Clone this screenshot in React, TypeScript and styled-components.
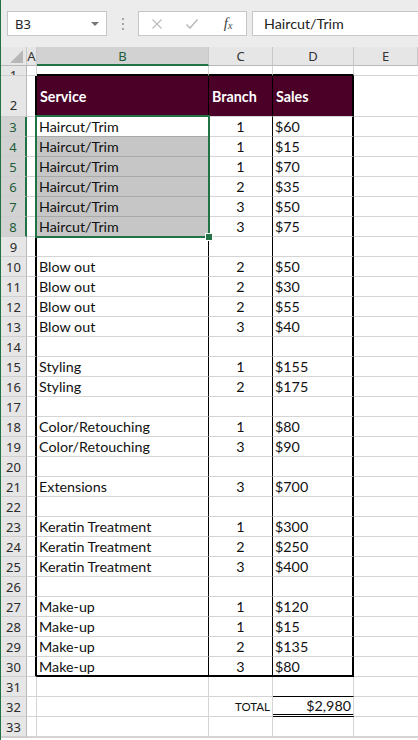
import React from "react";
import styled, { createGlobalStyle } from "styled-components";

const GREEN = "#217346";
const GRID = "#d4d4d4";
const MAROON = "#4a0027";
const CELL_FONT = `"Lato", "Open Sans", sans-serif`;
const UI_FONT = `"Noto Sans", "Open Sans", sans-serif`;

type Edge = "grid" | "thin" | "thick" | "double" | "sel" | "none";

const line = (e: Edge = "grid") => {
  switch (e) {
    case "thin":
      return "1px solid #000";
    case "thick":
      return "2px solid #000";
    case "double":
      return "3px double #000";
    case "sel":
      return "1px solid #a9a9a9";
    case "none":
      return "none";
    default:
      return `1px solid ${GRID}`;
  }
};

const GlobalStyle = createGlobalStyle`
  html, body { margin: 0; padding: 0; background: #fff; overflow: hidden; }
`;

const Window = styled.div`
  width: 418px;
  height: 740px;
  box-sizing: border-box;
  border-left: 1px solid ${GREEN};
  overflow: hidden;
  background: #fff;
`;

const Toolbar = styled.div`
  height: 47px;
  box-sizing: border-box;
  padding: 11px 0 0 6px;
  display: flex;
  align-items: flex-start;
  background: #ececec;
`;

const NameBox = styled.div`
  width: 100px;
  height: 25px;
  box-sizing: border-box;
  border: 1px solid #c6c6c6;
  background: #fff;
  display: flex;
  align-items: center;
  justify-content: space-between;
  padding: 0 7px 0 7px;
  font: 13px ${UI_FONT};
  color: #222;
`;

const Caret = styled.span`
  width: 0;
  height: 0;
  border-left: 4px solid transparent;
  border-right: 4px solid transparent;
  border-top: 4px solid #777;
`;

const Dots = styled.div`
  width: 31px;
  height: 25px;
  display: flex;
  flex-direction: column;
  align-items: center;
  justify-content: center;
  gap: 3px;
  span {
    width: 2px;
    height: 2px;
    background: #a6a6a6;
  }
`;

const FxGroup = styled.div`
  width: 109px;
  height: 25px;
  box-sizing: border-box;
  border: 1px solid #c6c6c6;
  background: #fff;
  display: grid;
  grid-template-columns: repeat(3, 1fr);
  align-items: center;
  justify-items: center;
`;

const FxLabel = styled.span`
  font: italic 15px "Liberation Serif", serif;
  color: #444;
  sub {
    font-size: 10px;
    vertical-align: -1px;
  }
`;

const FormulaInput = styled.div`
  flex: 1;
  margin-left: 5px;
  height: 25px;
  box-sizing: border-box;
  border: 1px solid #c6c6c6;
  border-right: none;
  background: #fff;
  display: flex;
  align-items: center;
  padding-left: 11px;
  font: 14.3px ${CELL_FONT};
  color: #222;
`;

const Sheet = styled.div`
  position: relative;
  display: grid;
  grid-template-columns: 26px 10px 172px 64px 81px 1fr;
  grid-template-rows: 19px 10px 41px repeat(31, 20px);
`;

const Corner = styled.div`
  position: relative;
  box-sizing: border-box;
  background: #e6e6e6;
  border-right: 1px solid #c9c9c9;
  border-bottom: 1px solid #b9b9b9;
  &::after {
    content: "";
    position: absolute;
    right: 3px;
    bottom: 2px;
    width: 0;
    height: 0;
    border-left: 13px solid transparent;
    border-bottom: 13px solid #b7b7b7;
  }
`;

const ColHead = styled.div<{ $active?: boolean }>`
  box-sizing: border-box;
  display: flex;
  align-items: center;
  justify-content: center;
  overflow: hidden;
  background: ${(p) => (p.$active ? "#d2d2d2" : "#e6e6e6")};
  border-right: 1px solid #c9c9c9;
  border-bottom: ${(p) => (p.$active ? `2px solid ${GREEN}` : "1px solid #b9b9b9")};
  font: 13px ${UI_FONT};
  color: ${(p) => (p.$active ? "#1d5c38" : "#333")};
`;

const RowHead = styled.div<{ $active?: boolean; $pin?: "top" | "bottom" }>`
  box-sizing: border-box;
  display: flex;
  align-items: ${(p) => (p.$pin === "top" ? "flex-start" : p.$pin === "bottom" ? "flex-end" : "center")};
  justify-content: center;
  padding-bottom: ${(p) => (p.$pin === "bottom" ? 2 : 0)}px;
  line-height: ${(p) => (p.$pin === "top" ? "4px" : "normal")};
  overflow: hidden;
  background: ${(p) => (p.$active ? "#d2d2d2" : "#e6e6e6")};
  border-right: ${(p) => (p.$active ? `2px solid ${GREEN}` : "1px solid #b9b9b9")};
  border-bottom: 1px solid #cfcfcf;
  font: 13px ${UI_FONT};
  color: ${(p) => (p.$active ? "#1d5c38" : "#2b2b2b")};
`;

const Cell = styled.div<{
  $align?: "left" | "center" | "right";
  $fill?: string;
  $head?: boolean;
  $small?: boolean;
  $right?: Edge;
  $bottom?: Edge;
}>`
  box-sizing: border-box;
  display: flex;
  align-items: center;
  justify-content: ${(p) =>
    p.$align === "center" ? "center" : p.$align === "right" ? "flex-end" : "flex-start"};
  padding: 0 2px 0 ${(p) => (p.$head ? 3 : 2)}px;
  overflow: hidden;
  white-space: nowrap;
  background: ${(p) => p.$fill || "#fff"};
  border-right: ${(p) => line(p.$right)};
  border-bottom: ${(p) => line(p.$bottom)};
  font-family: ${CELL_FONT};
  font-size: ${(p) => (p.$small ? 11.5 : 14.3)}px;
  font-weight: ${(p) => (p.$head ? 700 : 400)};
  color: ${(p) => (p.$head ? "#fff" : "#111")};
`;

const Selection = styled.div`
  position: absolute;
  left: 34px;
  top: 68px;
  width: 175px;
  height: 123px;
  box-sizing: border-box;
  border: 2px solid ${GREEN};
  pointer-events: none;
`;

const Handle = styled.span`
  position: absolute;
  right: -5px;
  bottom: -5px;
  width: 6px;
  height: 6px;
  background: ${GREEN};
  border: 1px solid #fff;
`;

type Row = { n: number; b?: string; c?: string; d?: string };

const rows: Row[] = [
  { n: 3, b: "Haircut/Trim", c: "1", d: "$60" },
  { n: 4, b: "Haircut/Trim", c: "1", d: "$15" },
  { n: 5, b: "Haircut/Trim", c: "1", d: "$70" },
  { n: 6, b: "Haircut/Trim", c: "2", d: "$35" },
  { n: 7, b: "Haircut/Trim", c: "3", d: "$50" },
  { n: 8, b: "Haircut/Trim", c: "3", d: "$75" },
  { n: 9 },
  { n: 10, b: "Blow out", c: "2", d: "$50" },
  { n: 11, b: "Blow out", c: "2", d: "$30" },
  { n: 12, b: "Blow out", c: "2", d: "$55" },
  { n: 13, b: "Blow out", c: "3", d: "$40" },
  { n: 14 },
  { n: 15, b: "Styling", c: "1", d: "$155" },
  { n: 16, b: "Styling", c: "2", d: "$175" },
  { n: 17 },
  { n: 18, b: "Color/Retouching", c: "1", d: "$80" },
  { n: 19, b: "Color/Retouching", c: "3", d: "$90" },
  { n: 20 },
  { n: 21, b: "Extensions", c: "3", d: "$700" },
  { n: 22 },
  { n: 23, b: "Keratin Treatment", c: "1", d: "$300" },
  { n: 24, b: "Keratin Treatment", c: "2", d: "$250" },
  { n: 25, b: "Keratin Treatment", c: "3", d: "$400" },
  { n: 26 },
  { n: 27, b: "Make-up", c: "1", d: "$120" },
  { n: 28, b: "Make-up", c: "1", d: "$15" },
  { n: 29, b: "Make-up", c: "2", d: "$135" },
  { n: 30, b: "Make-up", c: "3", d: "$80" },
];

const XIcon = () => (
  <svg width="12" height="12" viewBox="0 0 12 12">
    <path d="M1.5 1.5 L10.5 10.5 M10.5 1.5 L1.5 10.5" stroke="#bdbdbd" strokeWidth="1.3" fill="none" />
  </svg>
);

const CheckIcon = () => (
  <svg width="14" height="12" viewBox="0 0 14 12">
    <path d="M1.5 6.5 L5 10 L12.5 1.5" stroke="#bdbdbd" strokeWidth="1.6" fill="none" />
  </svg>
);

const isSel = (n: number) => n >= 3 && n <= 8;

export default function App() {
  return (
    <>
      <GlobalStyle />
      <Window>
        <Toolbar>
          <NameBox>
            B3
            <Caret />
          </NameBox>
          <Dots>
            <span />
            <span />
            <span />
          </Dots>
          <FxGroup>
            <XIcon />
            <CheckIcon />
            <FxLabel>
              f<sub>x</sub>
            </FxLabel>
          </FxGroup>
          <FormulaInput>Haircut/Trim</FormulaInput>
        </Toolbar>

        <Sheet>
          <Corner />
          <ColHead>A</ColHead>
          <ColHead $active>B</ColHead>
          <ColHead>C</ColHead>
          <ColHead>D</ColHead>
          <ColHead>E</ColHead>

          {/* row 1 - thin spacer above the table */}
          <RowHead $pin="top">1</RowHead>
          <Cell />
          <Cell $bottom="thick" />
          <Cell $bottom="thick" />
          <Cell $bottom="thick" />
          <Cell $right="none" />

          {/* row 2 - header */}
          <RowHead $pin="bottom">2</RowHead>
          <Cell $right="thick" />
          <Cell $head $fill={MAROON} $right="thin">Service</Cell>
          <Cell $head $fill={MAROON} $right="thin">Branch</Cell>
          <Cell $head $fill={MAROON} $right="thick">Sales</Cell>
          <Cell $right="none" />

          {rows.map((r) => {
            const last = r.n === 30;
            const bottom: Edge = last ? "thick" : "grid";
            const selFill = r.n >= 4 && r.n <= 8;
            return (
              <React.Fragment key={r.n}>
                <RowHead $active={isSel(r.n)}>{r.n}</RowHead>
                <Cell $right="thick" />
                <Cell
                  $right="thin"
                  $bottom={last ? "thick" : isSel(r.n) ? "sel" : bottom}
                  $fill={selFill ? "#c6c6c6" : undefined}
                >
                  {r.b}
                </Cell>
                <Cell $align="center" $right="thin" $bottom={bottom}>
                  {r.c}
                </Cell>
                <Cell $right="thick" $bottom={bottom}>
                  {r.d}
                </Cell>
                <Cell $right="none" />
              </React.Fragment>
            );
          })}

          <RowHead>31</RowHead>
          <Cell />
          <Cell />
          <Cell />
          <Cell $bottom="thin" />
          <Cell $right="none" />

          <RowHead>32</RowHead>
          <Cell />
          <Cell />
          <Cell $align="right" $small>
            TOTAL
          </Cell>
          <Cell $align="right" $bottom="double">
            $2,980
          </Cell>
          <Cell $right="none" />

          <RowHead>33</RowHead>
          <Cell />
          <Cell />
          <Cell />
          <Cell />
          <Cell $right="none" />

          {/* row 34 only peeks in at the bottom edge */}
          <RowHead />
          <Cell />
          <Cell />
          <Cell />
          <Cell />
          <Cell $right="none" />

          <Selection>
            <Handle />
          </Selection>
        </Sheet>
      </Window>
    </>
  );
}
